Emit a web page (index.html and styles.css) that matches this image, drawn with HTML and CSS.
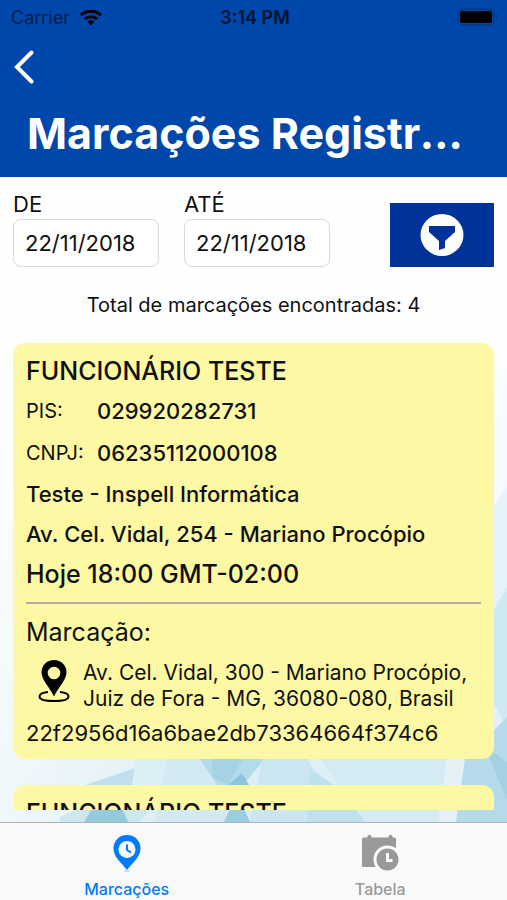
FILE: index.html
```html
<!DOCTYPE html>
<html lang="pt-BR">
<head>
  <meta charset="UTF-8" />
  <meta name="viewport" content="width=device-width, initial-scale=1.0" />
  <title>Marcações Registradas</title>
  <link rel="stylesheet" href="styles.css">
</head>
<body>
  <!-- cabeçalho -->
  <header class="header">
    <div class="status-bar">
      <div class="status-left">
        <span>Carrier</span>
        <svg class="wifi" viewBox="0 0 22 17" aria-hidden="true">
          <g fill="none" stroke="#000" stroke-width="3">
            <path d="M1 6.2a14.500 14.500 0 0 1 20 0"/>
            <path d="M4.800 10a9.300 9.300 0 0 1 12.400 0"/>
          </g>
          <path d="M11 16.500l-3.600-3.800a5.400 5.400 0 0 1 7.200 0z"/>
        </svg>
      </div>
      <span class="status-time">3:14 PM</span>
      <div class="status-right">
        <svg class="battery" viewBox="0 0 42 18" aria-hidden="true">
          <rect x="1" y="1" width="36" height="16" rx="4" fill="none" stroke="#003a8c" stroke-width="1.500"/>
          <rect x="3" y="3" width="32" height="12" rx="2"/>
          <path d="M39 6q3 3 0 6z" fill="#00307a"/>
        </svg>
      </div>
    </div>
    <button class="back-button" type="button" aria-label="Voltar">
      <svg viewBox="0 0 20 34" aria-hidden="true">
        <path d="M17.500 2.500L3 17l14.500 14.500" fill="none" stroke="#fff" stroke-width="4" stroke-linecap="round" stroke-linejoin="miter"/>
      </svg>
    </button>
    <h1>Marcações Registradas</h1>
  </header>

  <main class="content">
    <!-- fundo -->
    <svg class="background" viewBox="0 0 507 645" preserveAspectRatio="none" aria-hidden="true">
      <defs>
        <linearGradient id="sky" x1="0" y1="0" x2="0" y2="1">
          <stop offset="0" stop-color="#ffffff"/>
          <stop offset="0.250" stop-color="#fdfeff"/>
          <stop offset="0.600" stop-color="#f0f8fc"/>
          <stop offset="1" stop-color="#d9edf5"/>
        </linearGradient>
        <linearGradient id="glow" x1="0" y1="0" x2="1" y2="0">
          <stop offset="0" stop-color="#ffffff" stop-opacity="0.600"/>
          <stop offset="0.400" stop-color="#ffffff" stop-opacity="0"/>
        </linearGradient>
      </defs>
      <rect width="507" height="645" fill="url(#sky)"/>
      <rect width="507" height="645" fill="url(#glow)"/>
      <path d="M494 330l13-20v130l-13 20z" fill="#e4f3f9"/>
      <path d="M490 440l17-30v140l-17-30z" fill="#cfe9f3"/>
      <path d="M60 640l75-34 10-24 25 26-30 37H60z" fill="#cde7f1"/>
      <path d="M85 608l50-17-3 17z" fill="#bfe0ec"/>
      <path d="M135 582h32l-5 30-29-4z" fill="#dceff6"/>
      <path d="M167 582h34l17 26 12 37h-75z" fill="#d3eaf3"/>
      <path d="M200 582h65l-22 26-13 20z" fill="#b3dcea"/>
      <path d="M212 582v18l16 8 15-26z" fill="#a3d3e5"/>
      <path d="M228 608l14-12 7 12-9 8z" fill="#8cc6dd"/>
      <path d="M92 632h30l6 13H84z" fill="#94cadc"/>
      <path d="M230 632h14l6 13h-26z" fill="#9acde0"/>
      <path d="M262 582h45l38 63h-95z" fill="#cbe6f1"/>
      <path d="M310 592l45 30 12 23h-60z" fill="#bfe0ed"/>
      <path d="M320 582h127l-10 63h-72z" fill="#d4ebf4"/>
      <path d="M447 582h18l-9 63h-18z" fill="#e4f2f8"/>
      <path d="M465 582l42-42v105h-51z" fill="#b5dbea"/>
      <path d="M485 570l22 15v38z" fill="#a3d0e2"/>
    </svg>

    <!-- filtro por data -->
    <form class="filter">
      <div class="field">
        <label for="dateFrom">DE</label>
        <input id="dateFrom" type="text" value="22/11/2018">
      </div>
      <div class="field">
        <label for="dateTo">ATÉ</label>
        <input id="dateTo" type="text" value="22/11/2018">
      </div>
      <button class="filter-button" type="button" aria-label="Filtrar">
        <svg viewBox="0 0 44 42" aria-hidden="true">
          <ellipse cx="22" cy="21" rx="21.500" ry="21" fill="#fff"/>
          <path d="M9 12h26v6l-10 9v7l-6 2v-9L9 18z" fill="#003399"/>
        </svg>
      </button>
    </form>

    <p class="total">Total de marcações encontradas: 4</p>

    <!-- lista de marcações -->
    <div class="list">
      <article class="card">
        <h2>FUNCIONÁRIO TESTE</h2>
        <dl>
          <div class="row"><dt>PIS:</dt><dd>029920282731</dd></div>
          <div class="row"><dt>CNPJ:</dt><dd>06235112000108</dd></div>
        </dl>
        <p class="company">Teste - Inspell Informática</p>
        <p class="company">Av. Cel. Vidal, 254 - Mariano Procópio</p>
        <p class="date">Hoje 18:00 GMT-02:00</p>
        <hr>
        <h3>Marcação:</h3>
        <div class="location">
          <svg class="pin" viewBox="0 0 32 42" aria-hidden="true">
            <path d="M10 32C4 32.500 1.500 34.500 1.500 36.500c0 3 6.500 4.500 14.500 4.500s14.500-1.500 14.500-4.500c0-2-2.500-4-8.500-4.500" fill="none" stroke="#000" stroke-width="2"/>
            <path fill-rule="evenodd" d="M16 0C9 0 3.500 5.300 3.500 12.200 3.500 20 11 26 16 36.500 21 26 28.500 20 28.500 12.200 28.500 5.300 23 0 16 0zm0 6.700a6.300 6.300 0 1 1 0 12.600 6.300 6.300 0 0 1 0-12.600z"/>
          </svg>
          <p>Av. Cel. Vidal, 300 - Mariano Procópio, Juiz de Fora - MG, 36080-080, Brasil</p>
        </div>
        <p class="hash">22f2956d16a6bae2db73364664f374c6</p>
      </article>

      <article class="card">
        <h2>FUNCIONÁRIO TESTE</h2>
      </article>
    </div>
  </main>

  <!-- abas -->
  <nav class="tabs">
    <a class="tab active" href="#marcacoes">
      <svg viewBox="0 0 40 40" aria-hidden="true">
        <path d="M20 2C12 2 6.500 8 6.500 15.500 6.500 24 14 29 20 37c6-8 13.500-13 13.500-21.500C33.500 8 28 2 20 2z" fill="#007aff"/>
        <circle cx="20" cy="16.500" r="8.500" fill="#f9f9f9"/>
        <path d="M20 11.500v5.500l4 2.500" fill="none" stroke="#007aff" stroke-width="2"/>
        <path d="M17.500 38h5" stroke="#8cc2ff" stroke-width="1"/>
      </svg>
      <span>Marcações</span>
    </a>
    <a class="tab" href="#tabela">
      <svg viewBox="0 0 40 40" aria-hidden="true">
        <path d="M3.500 4.500h4V3q2-2.500 4 0v1.500h17V3q2-2.500 4 0v1.500h2q1.500 0 1.500 1.500v27q0 1-1 1H3.500q-1.500 0-1.500-1.500V6q0-1.500 1.500-1.500z" fill="#999"/>
        <circle cx="27.500" cy="26.500" r="14" fill="#f9f9f9"/>
        <path d="M27 26h10v10H27z" fill="#f9f9f9"/>
        <circle cx="27.500" cy="26.500" r="11" fill="#999"/>
        <path d="M27.500 20v7.500h5" fill="none" stroke="#f9f9f9" stroke-width="3"/>
      </svg>
      <span>Tabela</span>
    </a>
  </nav>
</body>
</html>
```
FILE: styles.css
```css
* {
  box-sizing: border-box;
}
body, input, button {
  font-family: Inter, "Liberation Sans", sans-serif;
}
body {
  margin: 0;
  height: 100vh;
  display: flex;
  flex-direction: column;
  overflow: hidden;
  background: #fff;
  color: #111;
}
h1, h2, h3, p, dl, dd {
  margin: 0;
}

/* === cabeçalho === */
.header {
  background: #0047ab;
  padding-bottom: 10px;
}
.status-bar {
  display: grid;
  grid-template-columns: 1fr auto 1fr;
  align-items: center;
  height: 34px;
  padding: 0 8px 0 11px;
  font-size: 18px;
  color: #000;
}
.status-left {
  display: flex;
  align-items: center;
  gap: 10px;
  color: #001c48;
}
.status-time {
  font-weight: 600;
  color: #00132f;
}
.status-right {
  display: flex;
  justify-content: flex-end;
}
.wifi {
  width: 22px;
  height: 17px;
}
.battery {
  width: 42px;
  height: 18px;
}
.back-button {
  display: block;
  padding: 16px 14px;
  border: none;
  background: none;
  cursor: pointer;
}
.back-button svg {
  display: block;
  width: 20px;
  height: 34px;
}
h1 {
  padding: 0 27px;
  font-size: 43px;
  line-height: 67px;
  font-weight: 700;
  color: #fff;
  white-space: nowrap;
  overflow: hidden;
  text-overflow: ellipsis;
}

/* === conteúdo === */
.content {
  position: relative;
  flex: 1;
  min-height: 0;
  display: flex;
  flex-direction: column;
  padding: 12px 13px;
}
.background {
  position: absolute;
  top: 0;
  left: 0;
  width: 100%;
  height: 100%;
  z-index: -1;
}

/* === filtro === */
.filter {
  display: flex;
  align-items: flex-end;
  gap: 25px;
}
.field {
  width: 146px;
}
.field label {
  display: block;
  font-size: 22px;
  line-height: 30px;
}
.field input {
  display: block;
  width: 100%;
  height: 48px;
  padding: 0 11px;
  border: 1px solid #d9d9d9;
  border-radius: 8px;
  background: #fff;
  font-size: 22px;
  color: #111;
}
.filter-button {
  width: 104px;
  height: 64px;
  margin-left: auto;
  padding: 0;
  border: none;
  background: #003399;
  cursor: pointer;
}
.filter-button svg {
  display: block;
  width: 44px;
  height: 42px;
  margin: 0 auto;
}
.total {
  padding: 22px 0;
  font-size: 20px;
  line-height: 32px;
  text-align: center;
}

/* === lista === */
.list {
  flex: 1;
  min-height: 0;
  overflow: hidden;
}
.card {
  margin-bottom: 26px;
  padding: 9px 13px 13px;
  border-radius: 12px;
  background: #fcf8a4;
}
h2 {
  font-size: 25px;
  line-height: 38px;
  font-weight: 500;
}
.row {
  display: flex;
  align-items: center;
  height: 42px;
}
dt {
  width: 71px;
  font-size: 20px;
}
dd {
  font-size: 22px;
  font-weight: 500;
}
.company {
  font-size: 22px;
  line-height: 40px;
  font-weight: 500;
}
.date {
  font-size: 25px;
  line-height: 40px;
  font-weight: 500;
}
hr {
  height: 2px;
  margin: 8px 0;
  border: none;
  background: #b3ada6;
}
h3 {
  font-size: 25px;
  line-height: 40px;
  font-weight: 400;
}
.location {
  display: flex;
  gap: 13px;
  padding: 8px 0 8px 12px;
  font-size: 21px;
  line-height: 26px;
}
.location p {
  flex: 1;
}
.pin {
  flex: none;
  width: 32px;
  height: 42px;
}
.hash {
  font-size: 22px;
  line-height: 26px;
}

/* === abas === */
.tabs {
  display: flex;
  height: 78px;
  border-top: 1px solid #b2b2b2;
  background: #f9f9f9;
}
.tab {
  flex: 1;
  display: flex;
  flex-direction: column;
  align-items: center;
  gap: 6px;
  padding-top: 10px;
  font-size: 16px;
  line-height: 20px;
  font-weight: 500;
  color: #999;
  text-decoration: none;
}
.tab.active {
  color: #007aff;
}
.tab svg {
  width: 40px;
  height: 40px;
}
```
